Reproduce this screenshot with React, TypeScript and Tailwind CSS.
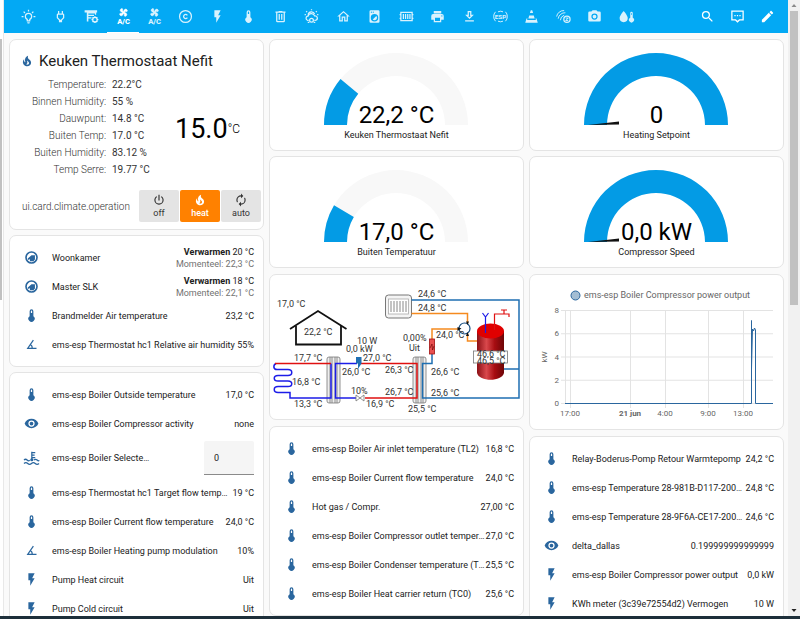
import { ReactNode } from "react";

type IconProps = { className?: string; children: ReactNode };

function Icon({ className = "size-[15px]", children }: IconProps) {
	return (
		<svg
			viewBox="0 0 24 24"
			fill="currentColor"
			className={`shrink-0 overflow-visible ${className}`}
			aria-hidden="true"
		>
			{children}
		</svg>
	);
}

const paths = {
	thermometer:
		"M15 13V5A3 3 0 0 0 9 5V13A5 5 0 1 0 15 13M12 4A1 1 0 0 1 13 5V8H11V5A1 1 0 0 1 12 4Z",
	flash: "M7,2V13H10V22L17,10H13L17,2H7Z",
	eye: "M12,9A3,3 0 0,0 9,12A3,3 0 0,0 12,15A3,3 0 0,0 15,12A3,3 0 0,0 12,9M12,17A5,5 0 0,1 7,12A5,5 0 0,1 12,7A5,5 0 0,1 17,12A5,5 0 0,1 12,17M12,4.5C7,4.5 2.73,7.61 1,12C2.73,16.39 7,19.5 12,19.5C17,19.5 21.27,16.39 23,12C21.27,7.61 17,4.5 12,4.5Z",
	angle: "M20,19H4.09L14.18,4.43L15.82,5.57L11.28,12.13C12.89,12.96 14,14.62 14,16.54C14,16.7 14,16.85 13.97,17H20V19M7.91,17H11.96C12,16.85 12,16.7 12,16.54C12,15.28 11.24,14.22 10.14,13.78L7.91,17Z",
	magnify:
		"M9.5,3A6.5,6.5 0 0,1 16,9.5C16,11.11 15.41,12.59 14.44,13.73L14.71,14H15.5L20.5,19L19,20.5L14,15.5V14.71L13.73,14.44C12.59,15.41 11.11,16 9.5,16A6.5,6.5 0 0,1 3,9.5A6.5,6.5 0 0,1 9.5,3M9.5,5C7,5 5,7 5,9.5C5,12 7,14 9.5,14C12,14 14,12 14,9.5C14,7 12,5 9.5,5Z",
	pencil:
		"M20.71,7.04C21.1,6.65 21.1,6 20.71,5.63L18.37,3.29C18,2.9 17.35,2.9 16.96,3.29L15.12,5.12L18.87,8.87M3,17.25V21H6.75L17.81,9.93L14.06,6.18L3,17.25Z",
	printer:
		"M18,3H6V7H18M19,12A1,1 0 0,1 18,11A1,1 0 0,1 19,10A1,1 0 0,1 20,11A1,1 0 0,1 19,12M16,19H8V14H16M19,8H5A3,3 0 0,0 2,11V17H6V21H18V17H22V11A3,3 0 0,0 19,8Z",
	download:
		"M13,5V11H14.17L12,13.17L9.83,11H11V5H13M15,3H9V9H5L12,16L19,9H15V3M19,18H5V20H19V18Z",
	camera:
		"M4,4H7L9,2H15L17,4H20A2,2 0 0,1 22,6V18A2,2 0 0,1 20,20H4A2,2 0 0,1 2,18V6A2,2 0 0,1 4,4M12,7A5,5 0 0,0 7,12A5,5 0 0,0 12,17A5,5 0 0,0 17,12A5,5 0 0,0 12,7M12,9A3,3 0 0,1 15,12A3,3 0 0,1 12,15A3,3 0 0,1 9,12A3,3 0 0,1 12,9Z",
	bulb: "M20,11H23V13H20V11M1,11H4V13H1V11M13,1V4H11V1H13M4.92,3.5L7.05,5.64L5.63,7.05L3.5,4.93L4.92,3.5M16.95,5.63L19.07,3.5L20.5,4.93L18.37,7.05L16.95,5.63M12,6A6,6 0 0,1 18,12C18,14.22 16.79,16.16 15,17.2V19A1,1 0 0,1 14,20H10A1,1 0 0,1 9,19V17.2C7.21,16.16 6,14.22 6,12A6,6 0 0,1 12,6M14,21V22A1,1 0 0,1 13,23H11A1,1 0 0,1 10,22V21H14M11,18H13V15.87C14.73,15.43 16,13.86 16,12A4,4 0 0,0 12,8A4,4 0 0,0 8,12C8,13.86 9.27,15.43 11,15.87V18Z",
	plug: "M16,7V3H14V7H10V3H8V7C7,7 6,8 6,9V14.5L9.5,18V21H14.5V18L18,14.5V9C18,8 17,7 16,7M16,13.67L12.67,17H11.33L8,13.67V9.09L8.09,9H15.92L16,9.09V13.67Z",
	trash: "M9,3V4H4V6H5V19A2,2 0 0,0 7,21H17A2,2 0 0,0 19,19V6H20V4H15V3H9M7,6H17V19H7V6M9,8V17H11V8H9M13,8V17H15V8H13Z",
	home: "M12 5.69L17 10.19V18H15V12H9V18H7V10.19L12 5.69M12 3L2 12H5V20H11V14H13V20H19V12H22",
	washer:
		"M14.83,11.17C16.39,12.73 16.39,15.26 14.83,16.83C13.26,18.39 10.73,18.39 9.17,16.83L14.83,11.17M6,2H18A2,2 0 0,1 20,4V20A2,2 0 0,1 18,22H6A2,2 0 0,1 4,20V4A2,2 0 0,1 6,2M7,4A1,1 0 0,0 6,5A1,1 0 0,0 7,6A1,1 0 0,0 8,5A1,1 0 0,0 7,4M10,4A1,1 0 0,0 9,5A1,1 0 0,0 10,6A1,1 0 0,0 11,5A1,1 0 0,0 10,4M12,8A6,6 0 0,0 6,14A6,6 0 0,0 12,20A6,6 0 0,0 18,14A6,6 0 0,0 12,8Z",
	fan: "M12.5,2C17,2 17.11,5.57 14.75,6.75C13.76,7.24 13.32,8.29 13.13,9.22C13.61,9.42 14.03,9.73 14.35,10.13C18.05,8.13 22.03,8.92 22.03,12.5C22.03,17 18.46,17.1 17.28,14.73C16.78,13.74 15.72,13.3 14.79,13.11C14.59,13.59 14.28,14 13.88,14.34C15.87,18.03 15.08,22 11.5,22C7,22 6.91,18.42 9.27,17.24C10.25,16.75 10.69,15.71 10.89,14.79C10.4,14.59 9.97,14.27 9.65,13.87C5.96,15.85 2,15.07 2,11.5C2,7 5.56,6.89 6.74,9.26C7.24,10.25 8.29,10.68 9.22,10.87C9.41,10.39 9.73,9.97 10.14,9.65C8.15,5.96 8.94,2 12.5,2Z",
	fire: "M17.66 11.2C17.43 10.9 17.15 10.64 16.89 10.38C16.22 9.78 15.46 9.35 14.82 8.72C13.33 7.26 13 4.85 13.95 3C13 3.23 12.17 3.75 11.46 4.32C8.87 6.4 7.85 10.07 9.07 13.22C9.11 13.32 9.15 13.42 9.15 13.55C9.15 13.77 9 13.97 8.8 14.05C8.57 14.15 8.33 14.09 8.14 13.93C8.08 13.88 8.04 13.83 8 13.76C6.87 12.33 6.69 10.28 7.45 8.64C5.78 10 4.87 12.3 5 14.47C5.06 14.97 5.12 15.47 5.29 15.97C5.43 16.57 5.7 17.17 6 17.7C7.08 19.43 8.95 20.67 10.96 20.92C13.1 21.19 15.39 20.8 17.03 19.32C18.86 17.66 19.5 15 18.56 12.72L18.43 12.46C18.22 12 17.66 11.2 17.66 11.2M14.5 17.5C14.22 17.74 13.76 18 13.4 18.1C12.28 18.5 11.16 17.94 10.5 17.28C11.69 17 12.4 16.12 12.61 15.23C12.78 14.43 12.46 13.77 12.33 13C12.21 12.26 12.23 11.63 12.5 10.94C12.69 11.32 12.89 11.7 13.13 12C13.9 13 15.11 13.44 15.37 14.8C15.41 14.94 15.43 15.08 15.43 15.23C15.46 16.05 15.1 16.95 14.5 17.5Z",
	power: "M16.56,5.44L15.11,6.89C16.84,7.94 18,9.83 18,12A6,6 0 0,1 12,18A6,6 0 0,1 6,12C6,9.83 7.16,7.94 8.88,6.88L7.44,5.44C5.36,6.88 4,9.28 4,12A8,8 0 0,0 12,20A8,8 0 0,0 20,12C20,9.28 18.64,6.88 16.56,5.44M13,3H11V13H13",
	renew: "M12,6V9L16,5L12,1V4A8,8 0 0,0 4,12C4,13.57 4.46,15.03 5.24,16.26L6.7,14.8C6.25,13.97 6,13 6,12A6,6 0 0,1 12,6M18.76,7.74L17.3,9.2C17.74,10.04 18,11 18,12A6,6 0 0,1 12,18V15L8,19L12,23V20A8,8 0 0,0 20,12C20,10.43 19.54,8.97 18.76,7.74Z",
};

const line = {
	fill: "none",
	stroke: "currentColor",
	strokeWidth: 2,
} as const;

const airco = (
	<>
		<path
			d={paths.fan}
			stroke="currentColor"
			transform="translate(12 5.500) rotate(45) scale(0.700) translate(-12 -12)"
		/>
		<text
			x="12"
			y="24"
			textAnchor="middle"
			fontSize="12"
			fontWeight="900"
			fontFamily="Roboto, sans-serif"
		>
			A/C
		</text>
	</>
);

const tabs: { name: string; icon: ReactNode }[] = [
	{ name: "Verlichting", icon: <path d={paths.bulb} /> },
	{ name: "Stekkers", icon: <path d={paths.plug} /> },
	{
		name: "Rolluiken",
		icon: (
			<>
				<path d="M1 2H21V5.500H19.500V9H17.500V7H7V9H16V11H7V13H12V15H7V20H4.500V5.500H1Z" />
				<circle cx="17.500" cy="17" r="3.500" {...line} />
				<path
					d="M17.500 11.500V14M17.500 20V22.500M12 17H14M21 17H23M13.700 13.200L15 14.500M20 19.500L21.300 20.800M21.300 13.200L20 14.500M15 19.500L13.700 20.800"
					{...line}
				/>
			</>
		),
	},
	{ name: "Keuken", icon: airco },
	{ name: "Airco", icon: airco },
	{
		name: "Copyright",
		icon: (
			<>
				<circle cx="12" cy="12" r="9.500" {...line} />
				<path d="M15 10.200A3.300 3.300 0 1 0 15 13.800" {...line} />
			</>
		),
	},
	{ name: "Energie", icon: <path d={paths.flash} /> },
	{ name: "Temperatuur", icon: <path d={paths.thermometer} /> },
	{ name: "Afval", icon: <path d={paths.trash} /> },
	{
		name: "Weer",
		icon: (
			<>
				<path
					d="M7.500 18H5.500A3.500 3.500 0 0 1 5.500 11.500H6.500A5.500 5.500 0 0 1 17 11A3.500 3.500 0 0 1 18.500 18H16.500"
					{...line}
				/>
				<path
					d="M6.500 9A5.500 5.500 0 0 1 17 8M12 0.500V2M3.500 3.500L5 5M20.500 3.500L19 5M1 9H3M21 9H23"
					{...line}
				/>
				<circle cx="12" cy="18" r="3" {...line} />
				<path d="M6 20.500H8.500V22.500H6ZM15.500 20.500H18V22.500H15.500Z" />
			</>
		),
	},
	{ name: "Huis", icon: <path d={paths.home} /> },
	{ name: "Wasmachine", icon: <path d={paths.washer} /> },
	{
		name: "Verwarming",
		icon: (
			<>
				<path d="M3 5.500H21V18.500H3ZM1 9H3M1 15H3M21 9H23M21 15H23" {...line} />
				<path d="M7 8V16M10.500 8V16M14 8V16M17.500 8V16" {...line} />
			</>
		),
	},
	{ name: "Printer", icon: <path d={paths.printer} /> },
	{ name: "Downloads", icon: <path d={paths.download} /> },
	{
		name: "ESP",
		icon: (
			<>
				<path
					d="M4 4.500A11 11 0 0 0 4 19.500M20 4.500A11 11 0 0 1 20 19.500M8 4.500A9 9 0 0 1 16 4.500M8 19.500A9 9 0 0 0 16 19.500"
					{...line}
					strokeWidth={1.5}
				/>
				<text
					x="12"
					y="15.500"
					textAnchor="middle"
					fontSize="10"
					fontWeight="700"
					fontFamily="Roboto, sans-serif"
				>
					ESP
				</text>
			</>
		),
	},
	{
		name: "VLC",
		icon: (
			<path d="M10.800 2H13.200L14.500 6.500H9.500ZM8.300 10.500H15.700L17 15H7ZM4 15H5.500L5 17.500H19L18.500 15H20L22 22H2Z" />
		),
	},
	{
		name: "Zigbee",
		icon: (
			<>
				<path
					d="M1 12A11.500 11.500 0 0 1 13 2.500M3.500 15.500A11 11 0 0 1 15 6M7 18A9 9 0 0 1 13 10"
					{...line}
					strokeWidth={1.5}
				/>
				<circle cx="17.500" cy="16.500" r="5" {...line} />
				<path d="M15.500 14.500H19.500L15.500 18.500H19.500" {...line} strokeWidth={1.5} />
			</>
		),
	},
	{ name: "Camera", icon: <path d={paths.camera} /> },
	{
		name: "Vochtigheid",
		icon: (
			<>
				<path d="M7.500 3C7.500 3 1 10 1 14.500A6.500 6.500 0 0 0 14 14.500C14 10 7.500 3 7.500 3Z" />
				<path d="M18 14V6.500A2 2 0 0 1 22 6.500V14A4 4 0 1 1 18 14ZM19.500 6.500V9.500H20.500V6.500Z" />
			</>
		),
	},
];

function Header() {
	return (
		<header className="flex h-[33px] shrink-0 items-stretch justify-between bg-[#03a9f4] pr-1.5 pl-[9px] text-white">
			<nav className="flex w-9/11">
				{tabs.map((tab) => (
					<button
						key={tab.name}
						type="button"
						aria-label={tab.name}
						className={`flex min-w-0 flex-1 items-center justify-center border-b ${
							tab.name === "Keuken"
								? "border-white"
								: "border-transparent text-white/85"
						}`}
					>
						<Icon>{tab.icon}</Icon>
					</button>
				))}
			</nav>
			<div className="flex">
				<button
					type="button"
					aria-label="Zoeken"
					className="flex w-[30px] items-center justify-center"
				>
					<Icon>
						<path d={paths.magnify} />
					</Icon>
				</button>
				<button
					type="button"
					aria-label="Assistent"
					className="flex w-[30px] items-center justify-center"
				>
					<Icon>
						<path d="M3 3.500H21V17.500H15L12 20.500L9 17.500H3Z" {...line} />
						<path d="M7 9.500H9V11.500H7ZM11 9.500H13V11.500H11ZM15 9.500H17V11.500H15Z" />
					</Icon>
				</button>
				<button
					type="button"
					aria-label="Bewerken"
					className="flex w-[30px] items-center justify-center"
				>
					<Icon>
						<path d={paths.pencil} />
					</Icon>
				</button>
			</div>
		</header>
	);
}

function Card({
	className = "",
	children,
}: {
	className?: string;
	children: ReactNode;
}) {
	return (
		<section
			className={`shrink-0 rounded-[7px] border border-[#e4e4e4] bg-white ${className}`}
		>
			{children}
		</section>
	);
}

const readings = [
	["Temperature:", "22.2°C"],
	["Binnen Humidity:", "55 %"],
	["Dauwpunt:", "14.8 °C"],
	["Buiten Temp:", "17.0 °C"],
	["Buiten Humidity:", "83.12 %"],
	["Temp Serre:", "19.77 °C"],
];

const modes = [
	{ name: "off", path: paths.power },
	{ name: "heat", path: paths.fire },
	{ name: "auto", path: paths.renew },
];

function ThermostatCard() {
	return (
		<Card className="pt-[13px] pb-[7px]">
			<h1 className="flex items-center gap-[5px] pl-2.5 text-[15px] leading-4 text-[#212121]">
				<Icon className="size-[14px] text-[#2a669e]">
					<path d={paths.fire} />
				</Icon>
				Keuken Thermostaat Nefit
			</h1>
			<div className="flex items-center pt-[7px]">
				<table className="w-[142px] text-[10px] leading-[17px]">
					<tbody>
						{readings.map(([label, value]) => (
							<tr key={label}>
								<th className="w-[96px] p-0 text-right font-light text-[#333]">
									{label}
								</th>
								<td className="py-0 pr-0 pl-[6px] whitespace-nowrap text-[#333]">
									{value}
								</td>
							</tr>
						))}
					</tbody>
				</table>
				<p className="flex flex-1 items-center justify-center pt-1 text-[27px] leading-8 text-black">
					15.0
					<span className="text-[12px] leading-4 font-light">°C</span>
				</p>
			</div>
			<div className="flex items-center justify-between pt-3 pr-0.5 pl-3">
				<span className="text-[10px] font-light text-[#333]">
					ui.card.climate.operation
				</span>
				<div className="flex gap-px">
					{modes.map((mode) => (
						<button
							key={mode.name}
							type="button"
							className={`flex h-8 w-10 flex-col items-center justify-center rounded-xs text-[9px] leading-3 ${
								mode.name === "heat"
									? "bg-[#ff8100] font-medium text-white"
									: "bg-[#e4e4e4] text-[#333]"
							}`}
						>
							<Icon className="size-[14px]">
								<path d={mode.path} />
							</Icon>
							{mode.name}
						</button>
					))}
				</div>
			</div>
		</Card>
	);
}

function point(radius: number, fraction: number) {
	const angle = Math.PI * (1 - fraction);
	return `${80 + radius * Math.cos(angle)} ${73 - radius * Math.sin(angle)}`;
}

function arc(fraction: number) {
	return `M${point(72, 0)}A72 72 0 0 1 ${point(72, fraction)}L${point(
		49,
		fraction,
	)}A49 49 0 0 0 ${point(49, 0)}Z`;
}

function Gauge({
	name,
	value,
	fraction,
	needle,
}: {
	name: string;
	value: string;
	fraction: number;
	needle?: boolean;
}) {
	return (
		<Card className="flex h-28 flex-col items-center pt-3">
			<div className="grid h-[73px] w-[160px] *:col-start-1 *:row-start-1">
				<svg viewBox="1 0 160 73" aria-hidden="true">
					<path d={arc(1)} fill="#f8f8f8" />
					<path d={arc(fraction)} fill="#039be5" />
					{needle && <path d="M12 73L43 69.500V72.500Z" fill="#111" />}
				</svg>
				<p className="self-end text-center text-2xl leading-5 whitespace-nowrap text-black">
					{value}
				</p>
			</div>
			<p className="pt-1 text-[9px] leading-3 text-[#212121]">{name}</p>
		</Card>
	);
}

const icons = {
	thermometer: <path d={paths.thermometer} />,
	flash: <path d={paths.flash} />,
	eye: <path d={paths.eye} />,
	angle: <path d={paths.angle} />,
	thermostat: (
		<>
			<circle cx="12" cy="12" r="8.800" {...line} strokeWidth={2.6} />
			<path d="M6 15.500V13.500L12 8.500H17.500V15L15 18H9.500V14.500L8 15.500Z" />
		</>
	),
	coolant: (
		<>
			<path d="M12.500 1V14M13 2.500H18M13 6.500H17M13 10.500H18" {...line} />
			<circle cx="12.500" cy="14" r="2.500" />
			<path
				d="M0 14.500Q2.500 12 5 14.500T9 14.500M16 14.500Q18.500 12 21 14.500T24 14.500M0 20Q3 17 6 20T12 20T18 20T24 20"
				{...line}
			/>
		</>
	),
};

type Row = { icon: keyof typeof icons; name: string; value: string };

function EntityRow({ icon, name, value }: Row) {
	return (
		<li className="flex h-[29px] items-center">
			<Icon className="mr-[13px] size-[15px] text-[#2a669e]">{icons[icon]}</Icon>
			<span className="mr-px min-w-0 flex-1 truncate">{name}</span>
			<span className="whitespace-nowrap">{value}</span>
		</li>
	);
}

function Entities({ children }: { children: ReactNode }) {
	return (
		<Card className="py-[7px] pr-[9px] pl-[14px]">
			<ul className="text-[9px] leading-3 text-[#212121]">{children}</ul>
		</Card>
	);
}

const climates = [
	{ name: "Woonkamer", target: "20 °C", current: "22,3 °C" },
	{ name: "Master SLK", target: "18 °C", current: "22,1 °C" },
];

const boilerRows: Row[] = [
	{
		icon: "thermometer",
		name: "ems-esp Thermostat hc1 Target flow temperature",
		value: "19 °C",
	},
	{
		icon: "thermometer",
		name: "ems-esp Boiler Current flow temperature",
		value: "24,0 °C",
	},
	{
		icon: "angle",
		name: "ems-esp Boiler Heating pump modulation",
		value: "10%",
	},
	{ icon: "flash", name: "Pump Heat circuit", value: "Uit" },
	{ icon: "flash", name: "Pump Cold circuit", value: "Uit" },
];

const sensorRows: Row[] = [
	{
		icon: "thermometer",
		name: "ems-esp Boiler Air inlet temperature (TL2)",
		value: "16,8 °C",
	},
	{
		icon: "thermometer",
		name: "ems-esp Boiler Current flow temperature",
		value: "24,0 °C",
	},
	{ icon: "thermometer", name: "Hot gas / Compr.", value: "27,00 °C" },
	{
		icon: "thermometer",
		name: "ems-esp Boiler Compressor outlet temperature",
		value: "27,0 °C",
	},
	{
		icon: "thermometer",
		name: "ems-esp Boiler Condenser temperature (TC3)",
		value: "25,5 °C",
	},
	{
		icon: "thermometer",
		name: "ems-esp Boiler Heat carrier return (TC0)",
		value: "25,6 °C",
	},
];

const relayRows: Row[] = [
	{
		icon: "thermometer",
		name: "Relay-Boderus-Pomp Retour Warmtepomp",
		value: "24,2 °C",
	},
	{
		icon: "thermometer",
		name: "ems-esp Temperature 28-981B-D117-2006-1",
		value: "24,8 °C",
	},
	{
		icon: "thermometer",
		name: "ems-esp Temperature 28-9F6A-CE17-2006-1",
		value: "24,6 °C",
	},
	{ icon: "eye", name: "delta_dallas", value: "0.199999999999999" },
	{
		icon: "flash",
		name: "ems-esp Boiler Compressor power output",
		value: "0,0 kW",
	},
	{
		icon: "flash",
		name: "KWh meter (3c39e72554d2) Vermogen",
		value: "10 W",
	},
];

const labels: [number, number, string][] = [
	[152, 26, "24,6 °C"],
	[152, 40, "24,8 °C"],
	[11, 36, "17,0 °C"],
	[38, 64, "22,2 °C"],
	[91, 73, "10 W"],
	[80, 81, "0,0 kW"],
	[137, 70, "0,00%"],
	[143, 80, "Uit"],
	[170, 67, "24,0 °C"],
	[28, 90, "17,7 °C"],
	[97, 90, "27,0 °C"],
	[76, 104, "26,0 °C"],
	[119, 102, "26,3 °C"],
	[165, 104, "26,6 °C"],
	[26, 114, "16,8 °C"],
	[85, 123, "10%"],
	[119, 124, "26,7 °C"],
	[165, 125, "25,6 °C"],
	[28, 136, "13,3 °C"],
	[100, 136, "16,9 °C"],
	[142, 141, "25,5 °C"],
];

function Exchanger({ x }: { x: number }) {
	return (
		<g stroke="#777" strokeWidth="0.8">
			<rect x={x} y="86" width="13" height="46" rx="2" fill="#eee" />
			<path
				d={`M${x + 3} 86V132M${x + 5} 86V132M${x + 8} 86V132M${x + 10} 86V132`}
			/>
		</g>
	);
}

function HeatPumpDiagram() {
	return (
		<Card>
			<svg
				viewBox="4 4 253 144"
				className="block w-full"
				role="img"
				aria-label="Warmtepomp"
			>
				<defs>
					<linearGradient id="tank">
						<stop offset="0" stopColor="#8c1015" />
						<stop offset="0.350" stopColor="#d9484c" />
						<stop offset="0.650" stopColor="#a80d12" />
						<stop offset="1" stopColor="#6d0507" />
					</linearGradient>
				</defs>

				{/* house */}
				<g fill="none" stroke="#111" strokeWidth="1.8">
					<path d="M24 58L52 40L80.500 58" />
					<path d="M30 55V73.500H75V55" />
				</g>

				{/* radiator */}
				<rect
					x="119.500"
					y="24"
					width="26"
					height="23"
					rx="3"
					fill="#f4f4f4"
					stroke="#777"
				/>
				<rect
					x="122.500"
					y="28"
					width="20"
					height="15"
					fill="#fff"
					stroke="#aaa"
					strokeWidth="0.8"
				/>
				<path
					d="M125 30V41M128 30V41M131 30V41M134 30V41M137 30V41M140 30V41"
					stroke="#888"
				/>

				<Exchanger x={61} />
				<Exchanger x={147} />

				<g fill="none" strokeWidth="1.5">
					<path
						d="M145.500 29H253V127H156.500V92.500H166V83M238 98H253"
						stroke="#1f6fb2"
					/>
					<path
						d="M145.500 42.500H201.500V53M201.500 62V70H211M166 68V58H194"
						stroke="#f58a1f"
					/>
					<path
						d="M10 92.500C7 94 7 98.500 11 98.500H22C27 98.500 27 104.500 22 104.500H12C7 104.500 7 110 12 110H22C27 110 27 115.500 22 115.500H12C7 115.500 7 121.500 12 121.500H24V127H65V92.500M90 127H69.500V92.500H91"
						stroke="#1c1ce8"
					/>
					<path d="M9 92.500H65M95 92.500H151V127H99" stroke="#e01010" />
				</g>

				{/* compressor and expansion valve */}
				<path d="M90 86H95.500V92.500L92 98V92.500H90Z" fill="#1f6fb2" />
				<path
					d="M90 124V130L98 124V130Z"
					fill="#fff"
					stroke="#777"
					strokeWidth="0.8"
				/>

				{/* electric heater */}
				<rect
					x="163.500"
					y="68"
					width="5"
					height="15"
					fill="#e85050"
					stroke="#a01010"
					strokeWidth="0.8"
				/>
				<path
					d="M164 77L166 73L166.500 79L168 75"
					fill="none"
					stroke="#600"
					strokeWidth="0.6"
				/>

				{/* circulation pump */}
				<circle
					cx="198.500"
					cy="57.500"
					r="5.500"
					fill="#fff"
					stroke="#164d80"
					strokeWidth="1.2"
				/>
				<path
					d="M191.500 56L195.500 57.500L191.500 60ZM200 50.500H203L201.500 54ZM200 65H203L201.500 61Z"
					fill="#111"
				/>

				{/* hot water tank */}
				<path
					d="M211 60V102C213 111 236 111 238 102V60Z"
					fill="url(#tank)"
				/>
				<ellipse cx="224.500" cy="60" rx="13.500" ry="7.500" fill="#e00000" />
				<path
					d="M216.500 42L219.500 46L222.500 42M219.500 46V62"
					fill="none"
					stroke="#1c1ce8"
					strokeWidth="1.2"
				/>
				<path
					d="M228.500 59V43H243V46M238 43V39M235 39H241"
					fill="none"
					stroke="#e01010"
					strokeWidth="1.2"
				/>
				<rect
					x="207.500"
					y="80"
					width="34"
					height="12"
					fill="#fff"
					stroke="#777"
					strokeWidth="0.8"
				/>
				<g fill="#333" fontSize="9" fontFamily="Roboto, sans-serif">
					<text x="211" y="86">
						46,6 °C
					</text>
					<text x="211" y="93">
						46,5 °C
					</text>
					{labels.map(([x, y, text]) => (
						<text key={`${x}-${y}`} x={x} y={y}>
							{text}
						</text>
					))}
				</g>
			</svg>
		</Card>
	);
}

const yTicks = [8, 6, 4, 2, 0];
const xTicks = [
	{ x: 40, label: "17:00" },
	{ x: 100, label: "21 jun" },
	{ x: 135, label: "4:00" },
	{ x: 178, label: "9:00" },
	{ x: 213, label: "13:00" },
];

function PowerChart() {
	return (
		<Card>
			<svg
				viewBox="0 0 253 154"
				className="block w-full"
				role="img"
				aria-label="ems-esp Boiler Compressor power output"
			>
				<circle
					cx="45.500"
					cy="20.500"
					r="4.500"
					fill="#a3bdd3"
					stroke="#2a669e"
				/>
				<g fill="#666" fontFamily="Roboto, sans-serif">
					<text x="54" y="23" fontSize="9">
						ems-esp Boiler Compressor power output
					</text>
					<text
						x="17"
						y="82"
						fontSize="8"
						textAnchor="middle"
						transform="rotate(-90 17 82)"
					>
						kW
					</text>
					{yTicks.map((tick) => (
						<g key={tick}>
							<path
								d={`M31 ${128.5 - tick * 11.625}H243`}
								stroke="#e3e3e3"
							/>
							<text
								x="29"
								y={131 - tick * 11.625}
								fontSize="8"
								textAnchor="end"
							>
								{tick}
							</text>
						</g>
					))}
					<path d="M35.500 35V129" stroke="#e3e3e3" />
					{xTicks.map((tick) => (
						<g key={tick.label}>
							<path d={`M${tick.x + 0.5} 35V133`} stroke="#e3e3e3" />
							<text
								x={tick.x}
								y="141"
								fontSize="8"
								fontWeight={tick.label === "21 jun" ? 700 : 400}
								textAnchor="middle"
							>
								{tick.label}
							</text>
						</g>
					))}
				</g>
				<path
					d="M35 128.500H221.500V45.500V94L222.500 54L223.500 56L224.500 53L225.500 55V128.500H243"
					fill="none"
					stroke="#2a669e"
				/>
			</svg>
		</Card>
	);
}

export default function App() {
	return (
		<div className="flex h-screen flex-col overflow-hidden bg-[#fafafa] font-[Roboto,sans-serif]">
			<div className="flex min-h-0 flex-1">
				<div className="w-1 border-r border-[#e8e8e8] bg-white pt-[39px]">
					<div className="h-[261px] w-0.5 bg-[#c1c1c1]" />
				</div>
				<div className="flex min-w-0 flex-1 flex-col">
					<Header />
					<main className="grid min-h-0 flex-1 grid-cols-3 gap-[5px] overflow-hidden pt-1.5 pr-1 pl-[5px]">
						<div className="flex min-w-0 flex-col gap-[5px]">
							<ThermostatCard />
							<Entities>
								{climates.map((climate) => (
									<li
										key={climate.name}
										className="flex h-[29px] items-center"
									>
										<Icon className="mr-[13px] size-[15px] text-[#2a669e]">
											{icons.thermostat}
										</Icon>
										<span className="flex-1">{climate.name}</span>
										<span className="text-right text-[#727272]">
											<span className="block text-[#212121]">
												<b className="font-bold">Verwarmen</b> {climate.target}
											</span>
											Momenteel: {climate.current}
										</span>
									</li>
								))}
								<EntityRow
									icon="thermometer"
									name="Brandmelder Air temperature"
									value="23,2 °C"
								/>
								<EntityRow
									icon="angle"
									name="ems-esp Thermostat hc1 Relative air humidity"
									value="55%"
								/>
							</Entities>
							<Entities>
								<EntityRow
									icon="thermometer"
									name="ems-esp Boiler Outside temperature"
									value="17,0 °C"
								/>
								<EntityRow
									icon="eye"
									name="ems-esp Boiler Compressor activity"
									value="none"
								/>
								<li className="flex h-10 items-center">
									<Icon className="mr-[13px] size-[15px] text-[#2a669e]">
										{icons.coolant}
									</Icon>
									<label htmlFor="selected-flow" className="w-[100px] truncate">
										ems-esp Boiler Selected flow temperature
									</label>
									<input
										id="selected-flow"
										type="text"
										defaultValue="0"
										className="ml-auto h-[34px] w-[50px] rounded-t-xs border-b border-[#8a8a8a] bg-[#f5f5f5] px-2.5"
									/>
								</li>
								{boilerRows.map((row) => (
									<EntityRow key={row.name} {...row} />
								))}
							</Entities>
						</div>
						<div className="flex min-w-0 flex-col gap-1.5">
							<div className="flex flex-col gap-[5px]">
								<Gauge
									name="Keuken Thermostaat Nefit"
									value="22,2 °C"
									fraction={0.22}
								/>
								<Gauge
									name="Buiten Temperatuur"
									value="17,0 °C"
									fraction={0.17}
								/>
							</div>
							<HeatPumpDiagram />
							<Entities>
								{sensorRows.map((row) => (
									<EntityRow key={row.name} {...row} />
								))}
							</Entities>
						</div>
						<div className="flex min-w-0 flex-col gap-1.5">
							<div className="flex flex-col gap-[5px]">
								<Gauge name="Heating Setpoint" value="0" fraction={1} needle />
								<Gauge
									name="Compressor Speed"
									value="0,0 kW"
									fraction={1}
									needle
								/>
							</div>
							<PowerChart />
							<Entities>
								{relayRows.map((row) => (
									<EntityRow key={row.name} {...row} />
								))}
							</Entities>
						</div>
					</main>
				</div>
				<div className="flex w-3 flex-col items-center justify-between bg-[#f1f1f1]">
					<div className="flex w-full flex-1 flex-col items-center">
						<svg viewBox="0 0 8 11" className="h-[11px] w-2" aria-hidden="true">
							<path d="M1.500 7L4 4L6.500 7Z" fill="#8a8a8a" />
						</svg>
						<div className="h-[294px] w-2 bg-[#c1c1c1]" />
					</div>
					<svg viewBox="0 0 8 11" className="h-[11px] w-2" aria-hidden="true">
						<path d="M1.500 4L4 7L6.500 4Z" fill="#222" />
					</svg>
				</div>
			</div>
			<footer className="h-[3px] shrink-0 bg-[#1d2f3a]" />
		</div>
	);
}
